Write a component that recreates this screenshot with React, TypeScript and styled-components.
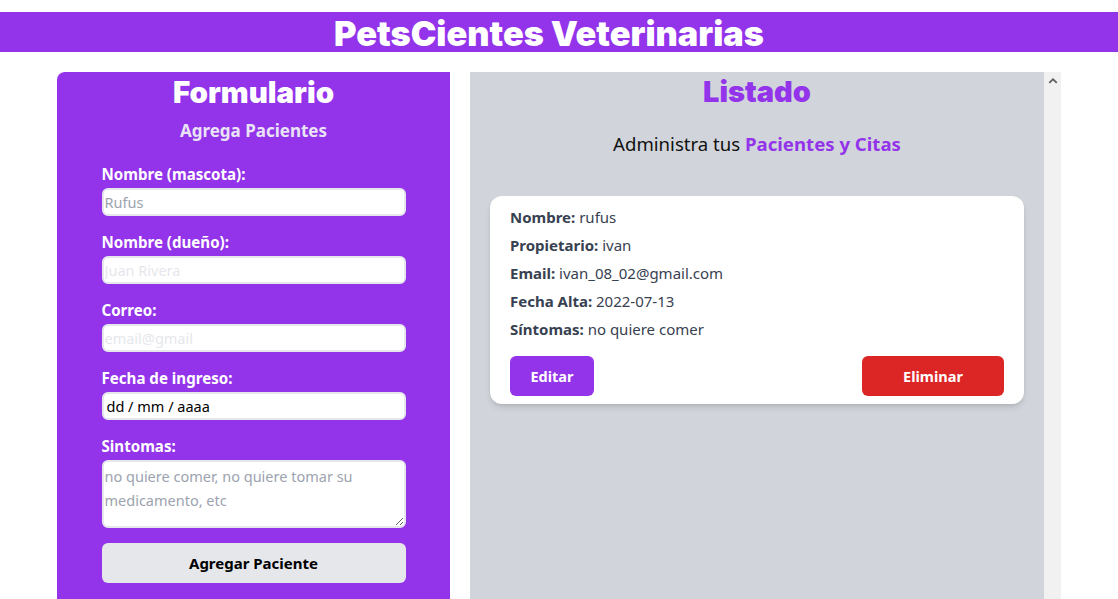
import React from "react";
import styled, { createGlobalStyle } from "styled-components";

const FONT = `"Noto Sans", "Liberation Sans", sans-serif`;
const TITLE_FONT = `"Inter", "Noto Sans", sans-serif`;
const PURPLE = "#9333ea";

const Global = createGlobalStyle`
  html, body { margin: 0; padding: 0; background: #fff; overflow: hidden; }
  body { font-family: ${FONT}; }
  * { box-sizing: border-box; }
`;

const Page = styled.div`
  width: 1118px;
  height: 599px;
  padding-top: 12px;
  display: flex;
  flex-direction: column;
  overflow: hidden;
`;

const Header = styled.h1`
  margin: 0;
  height: 40px;
  padding-right: 20px;
  background: ${PURPLE};
  color: #fff;
  font-family: ${TITLE_FONT};
  font-weight: 900;
  font-size: 34.3px;
  line-height: 44px;
  text-align: center;
`;

const Main = styled.main`
  display: grid;
  grid-template-columns: 393px 591px;
  column-gap: 20px;
  width: 1004px;
  margin: 20px auto 0;
  flex: 1;
  min-height: 0;
`;

const FormPanel = styled.section`
  background: ${PURPLE};
  border-top-left-radius: 8px;
  padding-top: 2px;
  height: 560px;
`;

const PanelTitle = styled.h2<{ $color: string; $size: number }>`
  margin: 0;
  font-family: ${TITLE_FONT};
  font-weight: 900;
  font-size: ${(p) => p.$size}px;
  line-height: 36px;
  text-align: center;
  color: ${(p) => p.$color};
`;

const Subtitle = styled.p`
  margin: 7px 0 19px;
  font-size: 17px;
  line-height: 28px;
  font-weight: 700;
  text-align: center;
  color: #e9e3f5;
`;

const Form = styled.form`
  width: 304px;
  margin: 0 auto;
  display: flex;
  flex-direction: column;
  gap: 16px;
`;

const Field = styled.div`
  display: flex;
  flex-direction: column;
  gap: 4px;
`;

const Label = styled.label`
  color: #fff;
  font-weight: 700;
  font-size: 15.1px;
  line-height: 20px;
`;

const Input = styled.input<{ $ph?: string }>`
  height: 28px;
  width: 100%;
  border: 2px solid #e5e7eb;
  border-radius: 6px;
  background: #fff;
  padding: 0 0 0 1px;
  font-family: ${FONT};
  font-size: 14.5px;
  color: #000;
  outline: none;
  &::placeholder { color: ${(p) => p.$ph || "#9ca3af"}; }
`;

const TextArea = styled.textarea`
  height: 68px;
  width: 100%;
  border: 2px solid #e5e7eb;
  border-radius: 6px;
  background: #fff;
  padding: 2px 1px;
  font-family: ${FONT};
  font-size: 14.5px;
  line-height: 24px;
  outline: none;
  resize: vertical;
  &::placeholder { color: #9ca3af; }
`;

const SubmitButton = styled.button`
  height: 40px;
  margin-top: -1px;
  border: none;
  border-radius: 6px;
  background: #e5e7eb;
  color: #000;
  font-family: ${FONT};
  font-weight: 700;
  font-size: 15px;
  cursor: pointer;
`;

const ListPanel = styled.section`
  display: flex;
  height: 560px;
`;

const ListBody = styled.div`
  flex: 1;
  min-width: 0;
  background: #d1d5db;
  overflow-y: auto;
  padding-top: 2px;
`;

const ScrollRail = styled.div`
  width: 17px;
  flex: none;
  background: #f1f1f1;
  display: flex;
  justify-content: center;
  padding-top: 5px;
`;

const Lead = styled.p`
  margin: 20px 0 38px;
  text-align: center;
  font-size: 18.6px;
  line-height: 28px;
  color: #111;
`;

const Accent = styled.span`
  color: ${PURPLE};
  font-weight: 700;
`;

const Card = styled.article`
  margin: 0 20px;
  background: #fff;
  border-radius: 12px;
  box-shadow: 0 4px 6px -1px rgba(0, 0, 0, 0.12), 0 2px 4px -2px rgba(0, 0, 0, 0.1);
  padding: 7px 20px 8px;
`;

const Row = styled.p`
  margin: 0;
  font-size: 15px;
  line-height: 28px;
  color: #374151;
`;

const Key = styled.span`
  font-weight: 700;
`;

const Actions = styled.div`
  display: flex;
  justify-content: space-between;
  margin-top: 13px;
`;

const ActionButton = styled.button<{ $bg: string; $w: number }>`
  width: ${(p) => p.$w}px;
  height: 40px;
  border: none;
  border-radius: 6px;
  background: ${(p) => p.$bg};
  color: #fff;
  font-family: ${FONT};
  font-weight: 700;
  font-size: 14.5px;
  cursor: pointer;
`;

function UpArrow() {
  return (
    <svg width="10" height="7" viewBox="0 0 10 7" aria-hidden="true">
      <path d="M0.6 5.2 L5 0.9 L9.4 5.2 L8.1 6.4 L5 3.4 L1.9 6.4 Z" fill="#606060" />
    </svg>
  );
}

export default function App() {
  return (
    <Page>
      <Global />
      <Header>PetsCientes Veterinarias</Header>
      <Main>
        <FormPanel>
          <PanelTitle $color="#fff" $size={29.5}>Formulario</PanelTitle>
          <Subtitle>Agrega Pacientes</Subtitle>
          <Form onSubmit={(e) => e.preventDefault()}>
            <Field>
              <Label htmlFor="mascota">Nombre (mascota):</Label>
              <Input id="mascota" placeholder="Rufus" />
            </Field>
            <Field>
              <Label htmlFor="dueno">Nombre (dueño):</Label>
              <Input id="dueno" placeholder="Juan Rivera" $ph="#e5e7eb" />
            </Field>
            <Field>
              <Label htmlFor="correo">Correo:</Label>
              <Input id="correo" placeholder="email@gmail" $ph="#e5e7eb" />
            </Field>
            <Field>
              <Label htmlFor="fecha">Fecha de ingreso:</Label>
              <Input id="fecha" defaultValue="dd / mm / aaaa" readOnly style={{ paddingLeft: 3 }} />
            </Field>
            <Field>
              <Label htmlFor="sintomas">Sintomas:</Label>
              <TextArea id="sintomas" placeholder="no quiere comer, no quiere tomar su medicamento, etc" />
            </Field>
            <SubmitButton type="submit">Agregar Paciente</SubmitButton>
          </Form>
        </FormPanel>
        <ListPanel>
          <ListBody>
            <PanelTitle $color={PURPLE} $size={29}>Listado</PanelTitle>
            <Lead>
              Administra tus <Accent>Pacientes y Citas</Accent>
            </Lead>
            <Card>
              <Row><Key>Nombre:</Key> rufus</Row>
              <Row><Key>Propietario:</Key> ivan</Row>
              <Row><Key>Email:</Key> ivan_08_02@gmail.com</Row>
              <Row><Key>Fecha Alta:</Key> 2022-07-13</Row>
              <Row><Key>Síntomas:</Key> no quiere comer</Row>
              <Actions>
                <ActionButton $bg={PURPLE} $w={84}>Editar</ActionButton>
                <ActionButton $bg="#dc2626" $w={142}>Eliminar</ActionButton>
              </Actions>
            </Card>
          </ListBody>
          <ScrollRail>
            <UpArrow />
          </ScrollRail>
        </ListPanel>
      </Main>
    </Page>
  );
}
